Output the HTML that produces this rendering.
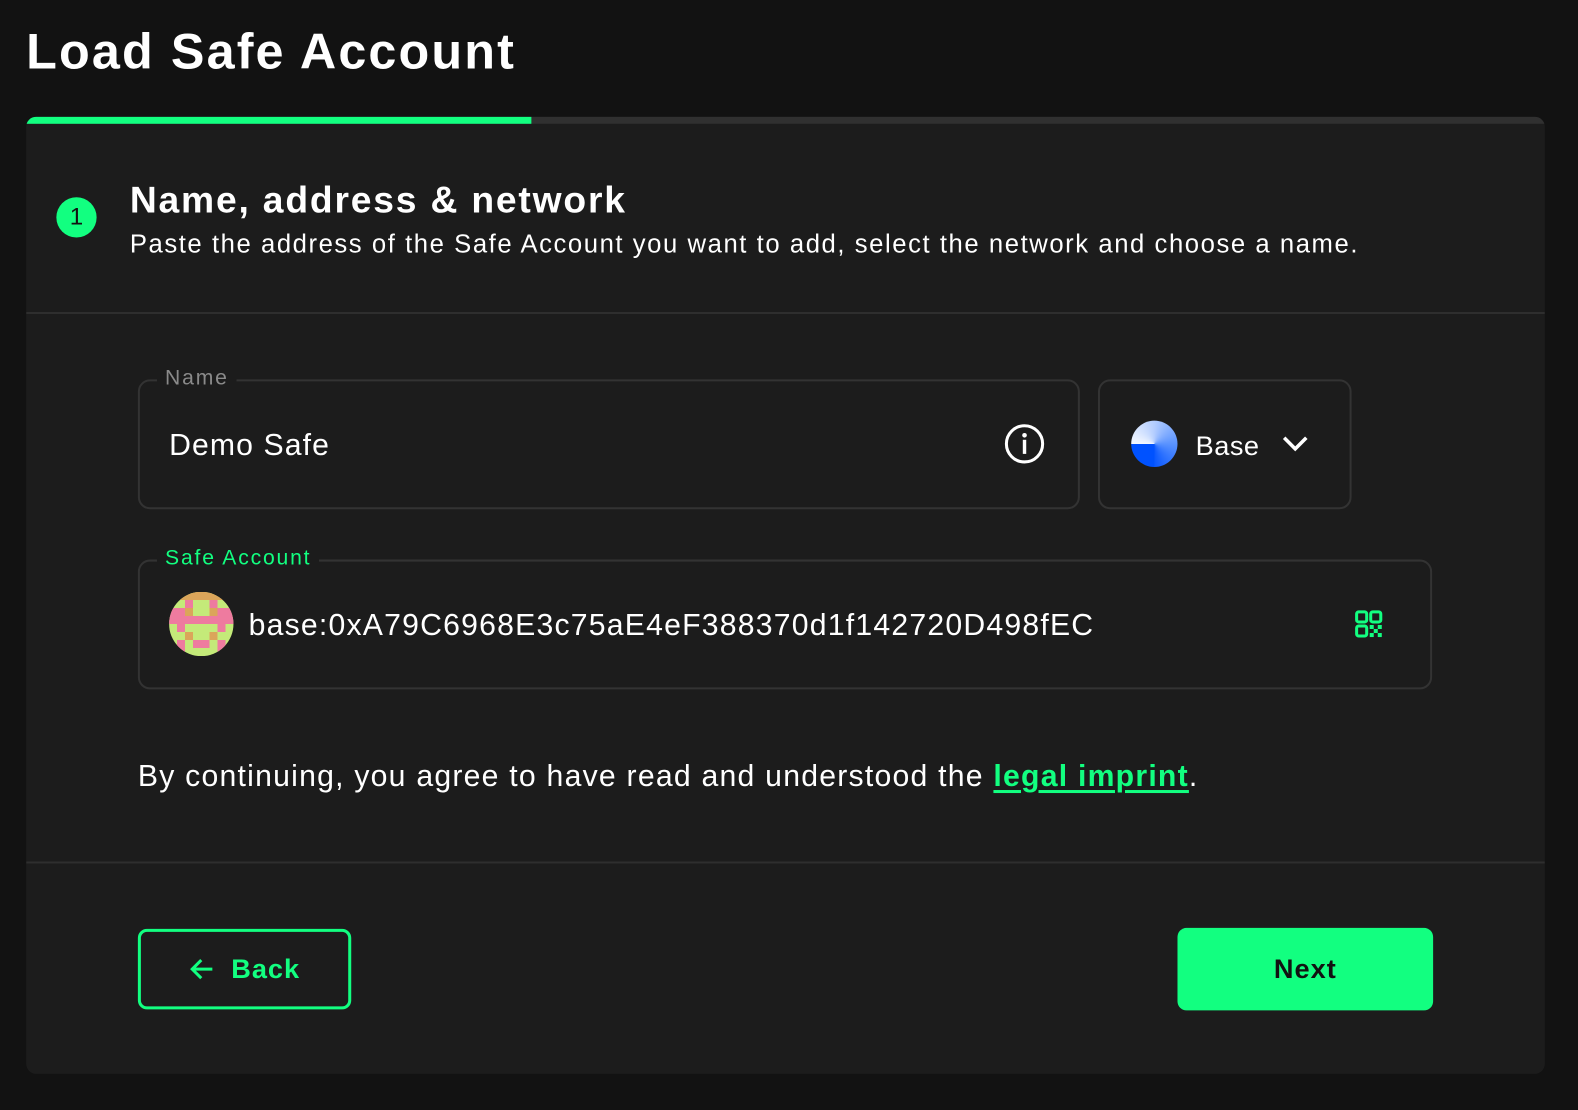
<!DOCTYPE html>
<html><head><meta charset="utf-8"><style>
*{box-sizing:border-box;margin:0;padding:0}
body{width:1578px;height:1110px;background:#121212;font-family:"Liberation Sans",sans-serif;color:#fff;overflow:hidden}
#w{position:relative;width:1568px;height:1103px;transform:scale(1.0064);transform-origin:0 0}
.abs{position:absolute}
h1{position:absolute;left:26px;top:22px;font-size:50px;font-weight:bold;letter-spacing:2.1px}
.card{left:26px;top:116px;width:1509px;height:951px;background:#1c1c1c;border-radius:10px;overflow:hidden}
.fs{border:2px solid #333;border-radius:12px}
.lbl{font-size:21px;background:#1c1c1c;padding:0 8px;letter-spacing:1.8px}
</style></head><body><div id="w">
<h1>Load Safe Account</h1>
<div class="abs card">
 <div class="abs" style="left:0;top:0;width:1509px;height:7px;background:#303030"></div>
 <div class="abs" style="left:0;top:0;width:502px;height:7px;background:#12ff80"></div>
 <div class="abs" style="left:30px;top:80px;width:40px;height:40px;border-radius:50%;background:#12ff80;color:#121212;font-size:24px;text-align:center;line-height:40px">1</div>
 <div class="abs" style="left:103px;top:62px;font-size:37px;font-weight:bold;letter-spacing:1.8px">Name, address &amp; network</div>
 <div class="abs" style="left:103px;top:113px;font-size:25.5px;letter-spacing:1.55px">Paste the address of the Safe Account you want to add, select the network and choose a name.</div>
 <div class="abs" style="left:0;top:194px;width:1509px;height:2px;background:#2e2e2e"></div>
 <div class="abs" style="left:0;top:740px;width:1509px;height:2px;background:#2e2e2e"></div>
</div>
<div class="abs fs" style="left:137px;top:377px;width:936px;height:129px"></div>
<div class="abs lbl" style="left:156px;top:364px;color:#8a8a8a">Name</div>
<div class="abs" style="left:168px;top:426px;font-size:30px;letter-spacing:1.1px">Demo Safe</div>
<svg class="abs" style="left:997px;top:420px" width="42" height="42" viewBox="0 0 42 42"><circle cx="21" cy="21" r="18" fill="none" stroke="#fff" stroke-width="3"/><circle cx="21" cy="12.5" r="2.3" fill="#fff"/><rect x="19.3" y="17" width="3.4" height="14" fill="#fff"/></svg>
<div class="abs fs" style="left:1091px;top:377px;width:252px;height:129px"></div>
<div class="abs" style="left:1124px;top:418px;width:46px;height:46px;border-radius:50%;background:conic-gradient(from 180deg,#0052ff 0deg 90deg,#f4f8ff 90deg,#b3cdff 180deg,#5a93ff 270deg,#0a58ff 360deg)"></div>
<div class="abs" style="left:1188px;top:428px;font-size:27px;letter-spacing:0.5px">Base</div>
<svg class="abs" style="left:1273px;top:430px" width="28" height="22" viewBox="0 0 28 22"><path d="M3 5l11 11 11-11" fill="none" stroke="#fff" stroke-width="3.5"/></svg>
<div class="abs fs" style="left:137px;top:556px;width:1286px;height:129px"></div>
<div class="abs lbl" style="left:156px;top:543px;color:#12ff80">Safe Account</div>
<svg class="abs" style="left:168px;top:588px" width="64" height="64" viewBox="0 0 8 8">
<defs><clipPath id="c"><circle cx="4" cy="4" r="4"/></clipPath></defs>
<g clip-path="url(#c)" shape-rendering="crispEdges">
<rect width="8" height="8" fill="#c4ea79"/>
<rect width="8" height="1" fill="#dba55a"/>
<rect x="2" y="1" width="1" height="1" fill="#ee7b9f"/><rect x="5" y="1" width="1" height="1" fill="#ee7b9f"/>
<rect x="0" y="2" width="2" height="1" fill="#ee7b9f"/><rect x="6" y="2" width="2" height="1" fill="#ee7b9f"/>
<rect x="2" y="2" width="1" height="1" fill="#dba55a"/><rect x="5" y="2" width="1" height="1" fill="#dba55a"/>
<rect x="0" y="3" width="8" height="1" fill="#ee7b9f"/>
<rect x="1" y="4" width="1" height="1" fill="#ee7b9f"/><rect x="6" y="4" width="1" height="1" fill="#ee7b9f"/>
<rect x="2" y="5" width="1" height="1" fill="#dba55a"/><rect x="5" y="5" width="1" height="1" fill="#dba55a"/>
<rect x="1" y="6" width="1" height="1" fill="#ee7b9f"/><rect x="3" y="6" width="2" height="1" fill="#ee7b9f"/><rect x="6" y="6" width="1" height="1" fill="#ee7b9f"/>
<rect x="1" y="7" width="1" height="1" fill="#ee7b9f"/><rect x="6" y="7" width="1" height="1" fill="#ee7b9f"/>
</g></svg>
<div class="abs" style="left:247px;top:605px;font-size:30px;letter-spacing:1.2px">base:0xA79C6968E3c75aE4eF388370d1f142720D498fEC</div>
<svg class="abs" style="left:1346px;top:606px" width="28" height="28" viewBox="0 0 28 28" fill="none" stroke="#12ff80" stroke-width="3"><rect x="2" y="2" width="10" height="10" rx="2"/><rect x="16" y="2" width="10" height="10" rx="2"/><rect x="2" y="16" width="10" height="10" rx="2"/><g fill="#12ff80" stroke="none"><rect x="15" y="15" width="4" height="4"/><rect x="23" y="15" width="4" height="4"/><rect x="19" y="19" width="4" height="4"/><rect x="15" y="23" width="4" height="4"/><rect x="23" y="23" width="4" height="4"/></g></svg>
<div class="abs" style="left:137px;top:755px;font-size:30px;letter-spacing:1.22px">By continuing, you agree to have read and understood the <span style="color:#12ff80;font-weight:bold;text-decoration:underline;text-underline-offset:4px">legal imprint</span>.</div>
<div class="abs" style="left:137px;top:923px;width:212px;height:80px;border:3px solid #12ff80;border-radius:9px;color:#12ff80;font-weight:bold;font-size:27px;letter-spacing:1px;display:flex;align-items:center;justify-content:center;gap:16px"><svg width="26" height="24" viewBox="0 0 26 24"><path d="M23 12H3M12 3L3 12l9 9" fill="none" stroke="#12ff80" stroke-width="3"/></svg>Back</div>
<div class="abs" style="left:1170px;top:922px;width:254px;height:82px;background:#12ff80;border-radius:9px;color:#121212;font-weight:bold;font-size:27px;letter-spacing:1px;display:flex;align-items:center;justify-content:center">Next</div>
</div></body></html>
